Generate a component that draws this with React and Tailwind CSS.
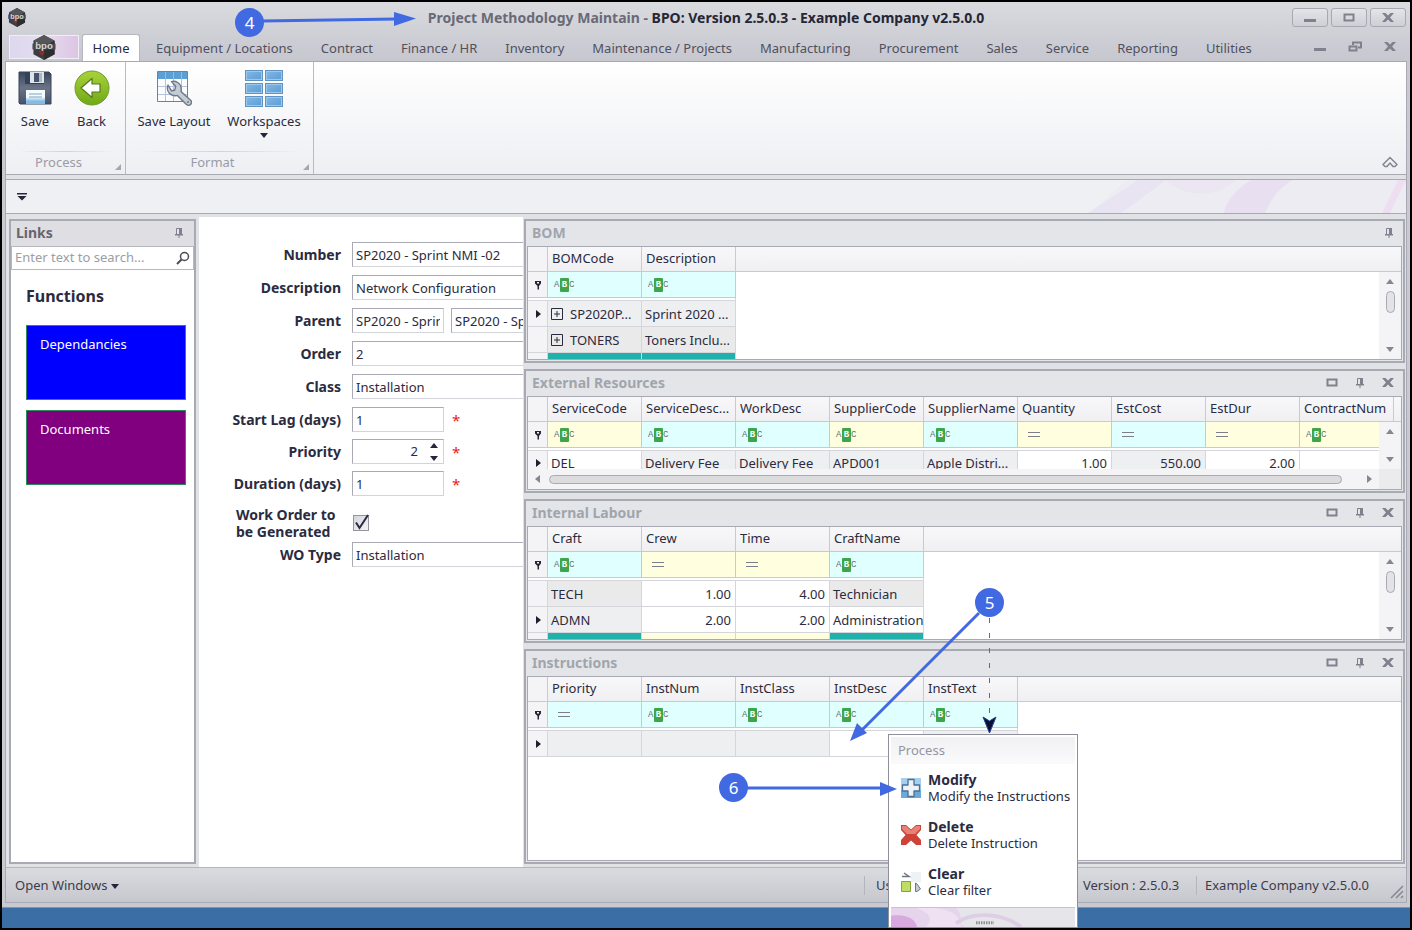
import React, { useState } from 'react';

const menuTabs = [
  'Equipment / Locations',
  'Contract',
  'Finance / HR',
  'Inventory',
  'Maintenance / Projects',
  'Manufacturing',
  'Procurement',
  'Sales',
  'Service',
  'Reporting',
  'Utilities',
];

const bom = {
  columns: [
    { name: 'BOMCode', filter: 'abc', tone: 'cyan' },
    { name: 'Description', filter: 'abc', tone: 'cyan' },
  ],
  rows: [
    { active: true, cells: [{ text: 'SP2020P...', expand: true, shade: 'light' }, { text: 'Sprint 2020 ...', shade: 'light' }] },
    { cells: [{ text: 'TONERS', expand: true, shade: 'grey' }, { text: 'Toners Inclu...', shade: 'grey' }] },
    { cells: [{ shade: 'teal' }, { shade: 'teal' }] },
  ],
};

const externalResources = {
  columns: [
    { name: 'ServiceCode', filter: 'abc', tone: 'yellow' },
    { name: 'ServiceDesc...', filter: 'abc', tone: 'cyan' },
    { name: 'WorkDesc', filter: 'abc', tone: 'cyan' },
    { name: 'SupplierCode', filter: 'abc', tone: 'yellow' },
    { name: 'SupplierName', filter: 'abc', tone: 'cyan' },
    { name: 'Quantity', filter: 'eq', tone: 'yellow' },
    { name: 'EstCost', filter: 'eq', tone: 'cyan' },
    { name: 'EstDur', filter: 'eq', tone: 'yellow' },
    { name: 'ContractNum', filter: 'abc', tone: 'yellow' },
  ],
  rows: [
    {
      active: true,
      cells: [
        { text: 'DEL' },
        { text: 'Delivery Fee', shade: 'light' },
        { text: 'Delivery Fee', shade: 'light' },
        { text: 'APD001', shade: 'light' },
        { text: 'Apple Distri...', shade: 'light' },
        { text: '1.00', right: true },
        { text: '550.00', right: true, shade: 'light' },
        { text: '2.00', right: true },
        {},
      ],
    },
  ],
};

const internalLabour = {
  columns: [
    { name: 'Craft', filter: 'abc', tone: 'cyan' },
    { name: 'Crew', filter: 'eq', tone: 'yellow' },
    { name: 'Time', filter: 'eq', tone: 'yellow' },
    { name: 'CraftName', filter: 'abc', tone: 'cyan' },
  ],
  rows: [
    { cells: [{ text: 'TECH', shade: 'grey' }, { text: '1.00', right: true }, { text: '4.00', right: true }, { text: 'Technician', shade: 'grey' }] },
    { active: true, cells: [{ text: 'ADMN', shade: 'light' }, { text: '2.00', right: true }, { text: '2.00', right: true }, { text: 'Administration' }] },
    { cells: [{ shade: 'teal' }, { shade: 'yellow' }, { shade: 'yellow' }, { shade: 'teal' }] },
  ],
};

const instructions = {
  columns: [
    { name: 'Priority', filter: 'eq', tone: 'cyan' },
    { name: 'InstNum', filter: 'abc', tone: 'cyan' },
    { name: 'InstClass', filter: 'abc', tone: 'cyan' },
    { name: 'InstDesc', filter: 'abc', tone: 'cyan' },
    { name: 'InstText', filter: 'abc', tone: 'cyan' },
  ],
  rows: [
    { active: true, cells: [{ shade: 'light' }, { shade: 'light' }, { shade: 'light' }, {}, { shade: 'light' }] },
  ],
};

const tones = { cyan: 'bg-[#e0ffff]', yellow: 'bg-[#ffffe0]' };

const shades = {
  light: 'bg-[#eeeff1]',
  grey: 'bg-[#eaeaea]',
  teal: 'bg-[#20b2aa]',
  yellow: 'bg-[#ffffe0]',
};

/* ---------- icons ---------- */

const BpoLogo = ({ className }) => (
  <svg viewBox="0 0 24 26" className={className} aria-hidden="true">
    <path d="M12 0 23 6v14l-11 6L1 20V6z" fill="#3d3d40" />
    <path d="M12 0 23 6 12 12 1 6z" fill="#56565a" />
    <path d="M12 12 23 6v14l-11 6z" fill="#2e2e31" />
    <path d="M7 16.500l3 3.500 2-3" stroke="#a8282c" strokeWidth="1.500" fill="none" />
    <path d="M0 9h24v6H0z" fill="#4a4a4e" />
    <text x="12" y="15" textAnchor="middle" fontSize="10" fontWeight="700" fontFamily="Liberation Sans, sans-serif" fill="#d4d4d8">bpo</text>
  </svg>
);

const SaveIcon = () => (
  <svg viewBox="0 0 36 36" className="h-9 w-9" aria-hidden="true">
    <defs>
      <linearGradient id="disk" x1="0" y1="0" x2="0" y2="1">
        <stop offset="0" stopColor="#39465a" />
        <stop offset="0.5" stopColor="#6b7485" />
        <stop offset="1" stopColor="#47536a" />
      </linearGradient>
      <linearGradient id="diskLabel" x1="0" y1="0" x2="0" y2="1">
        <stop offset="0.5" stopColor="#f5fafd" />
        <stop offset="0.8" stopColor="#7fbde6" />
      </linearGradient>
    </defs>
    <path d="M2 2h30l2 2v30H3l-1-1z" fill="url(#disk)" stroke="#39445a" />
    <path d="M8 2h19v12H8z" fill="#34415a" />
    <path d="M13 2h14v11H13z" fill="#dfe3ea" />
    <path d="M17 3h7v9h-7z" fill="#45536b" />
    <path d="M22 3h3v9h-3z" fill="#aeb7c5" />
    <path d="M9 20h19v14H9z" fill="url(#diskLabel)" />
    <path d="M12 24h13M12 27h13" stroke="#7ea5c4" />
  </svg>
);

const BackIcon = () => (
  <svg viewBox="0 0 36 36" className="h-9 w-9" aria-hidden="true">
    <defs>
      <linearGradient id="back" x1="0" y1="0" x2="0" y2="1">
        <stop offset="0" stopColor="#a9d23c" />
        <stop offset="1" stopColor="#6fa916" />
      </linearGradient>
    </defs>
    <circle cx="18" cy="18" r="17" fill="url(#back)" stroke="#6f9a2b" />
    <path d="M7 18 18 8.500v5.500h8v8h-8v5.500z" fill="#fff" stroke="#56791d" strokeWidth="1.200" strokeLinejoin="round" />
  </svg>
);

const LayoutIcon = () => (
  <svg viewBox="0 0 36 36" className="h-9 w-9" aria-hidden="true">
    <path d="M1.500 1.500h30v30h-30z" fill="#fafcfe" stroke="#6384a8" />
    <path d="M2 2h29v7H2z" fill="#5c9fd4" />
    <path d="M9.500 2v7M17.500 2v7M25.500 2v7" stroke="#8abde3" />
    <path d="M2 16.500h29M2 24.500h29M9.500 9v22M17.500 9v22M25.500 9v22" stroke="#b4c3dc" />
    <path
      d="M12 15c-1.500 4 0 8 3.500 9.800 2 1 4 1.100 5.800.6l9.200 9c1.200 1.200 3 1.100 4.100 0 1.200-1.200 1.300-3 0-4.200L25 21.500c.7-3.500-.3-7-3.300-9-2-1.200-4.300-1.500-6.200-.9l4.200 4.600-1 4-3.200.6z"
      fill="#c3cbd5"
      stroke="#6d7887"
      strokeWidth="1.400"
      strokeLinejoin="round"
    />
    <circle cx="32" cy="32" r="1" fill="#6d7887" />
  </svg>
);

const WorkspacesIcon = () => (
  <svg viewBox="0 0 38 38" className="h-[38px] w-[38px]" aria-hidden="true">
    <defs>
      <linearGradient id="tile" x1="0" y1="0" x2="1" y2="1">
        <stop offset="0" stopColor="#84b9e6" />
        <stop offset="1" stopColor="#5b9bd3" />
      </linearGradient>
    </defs>
    {[0, 13, 26].map((y) =>
      [0, 20].map((x) => (
        <g key={`${x}-${y}`} fill="none">
          <rect x={x + 0.5} y={y + 0.5} width="17" height="10" fill="url(#tile)" stroke="#5f93c4" />
          <rect x={x + 1.5} y={y + 1.5} width="15" height="8" stroke="#9ac8ec" />
        </g>
      ))
    )}
  </svg>
);

const PinIcon = () => (
  <svg viewBox="0 0 10 12" className="h-3 w-[10px]" aria-hidden="true">
    <path d="M2.500 1.500h5v6h-5z" fill="#e4e5ea" stroke="#80818d" />
    <path d="M5 1h3v6H5zM1 7h8v1.500H1zM4.500 8h1v3h-1z" fill="#80818d" />
  </svg>
);

const BoxIcon = () => (
  <svg viewBox="0 0 12 10" className="h-[10px] w-3" aria-hidden="true">
    <path d="M1.500 1.500h9v6h-9z" fill="none" stroke="#80818d" strokeWidth="2" />
  </svg>
);

const CloseIcon = () => (
  <svg viewBox="0 0 12 10" className="h-[10px] w-3" aria-hidden="true">
    <path d="M0 0h3.500L6 2.500 8.500 0H12L8 4.500 12 9H8.500L6 6.500 3.500 9H0l4-4.500z" fill="#80818d" />
  </svg>
);

const MinIcon = () => (
  <svg viewBox="0 0 12 10" className="h-[10px] w-3" aria-hidden="true">
    <path d="M0 6h12v3H0z" fill="#80818d" />
  </svg>
);

const RestoreIcon = () => (
  <svg viewBox="0 0 14 12" className="h-3 w-[14px]" aria-hidden="true">
    <path d="M5 4V1.500h8v5h-3" fill="none" stroke="#80818d" strokeWidth="2" />
    <path d="M1.500 5.500h7v4h-7z" fill="none" stroke="#80818d" strokeWidth="2" />
  </svg>
);

const Arrow = ({ dir, className = 'text-[#85868f]' }) => {
  const paths = {
    up: 'M0 6 4 1l4 5z',
    down: 'M0 2h8L4 7z',
    left: 'M6 0v8L1 4z',
    right: 'M2 0v8l5-4z',
  };
  return (
    <svg viewBox="0 0 8 8" className={`h-2 w-2 shrink-0 ${className}`} aria-hidden="true">
      <path d={paths[dir]} fill="currentColor" />
    </svg>
  );
};

const FilterRowIcon = () => (
  <svg viewBox="0 0 8 10" className="mx-auto h-[10px] w-2" aria-hidden="true">
    <path d="M1 1h6v2.500L5 6v3.500H3.500V6L1 3.500z" fill="#26263a" />
    <path d="M3 2h2v1.500H3z" fill="#f5f5f8" />
  </svg>
);

const ExpandIcon = () => (
  <svg viewBox="0 0 12 12" className="h-3 w-3 shrink-0" aria-hidden="true">
    <path d="M.5.500h11v11H.5zM3 6h6M6 3v6" fill="none" stroke="#2b2b3f" />
  </svg>
);

const AbcIcon = () => (
  <span className="flex items-center pl-[6px] font-['Liberation_Mono',monospace] text-[9px] leading-[14px] text-[#6c6c72]">
    <span className="w-[6px]">A</span>
    <span className="flex w-[9px] justify-center rounded-[1px] bg-[#3fa54a] font-bold text-white">B</span>
    <span>C</span>
  </span>
);

const EqualsIcon = () => (
  <span className="ml-[10px] block h-[5px] w-3 border-y border-[#7d7f88]" />
);

/* ---------- docked panels ---------- */

const Panel = ({ title, pinOnly, className, children }) => (
  <section className={`flex flex-col border-2 border-[#a8a9b2] bg-[#e4e5e9] px-px pb-px ${className}`}>
    <header className="flex h-[25px] shrink-0 items-center pr-2 pb-[2px] pl-[5px]">
      <h2 className="flex-1 text-[14px] leading-5 font-bold text-[#a0a5ad]">{title}</h2>
      <div className="flex items-center gap-[17px]">
        {!pinOnly && <button aria-label={`Maximize ${title}`}><BoxIcon /></button>}
        <button aria-label={`Pin ${title}`}><PinIcon /></button>
        {!pinOnly && <button aria-label={`Close ${title}`}><CloseIcon /></button>}
      </div>
    </header>
    <div className="flex min-h-0 flex-1 flex-col border border-[#a8a9b2] bg-white">{children}</div>
  </section>
);

const VScroll = ({ thumb }) => (
  <div className="z-10 col-start-1 row-start-1 mt-[25px] flex w-[22px] flex-col items-center justify-self-end bg-[#f4f4f6] py-[6px]">
    <Arrow dir="up" />
    {thumb && <div className="mt-[5px] h-[22px] w-[9px] rounded-full border border-[#a9aab2] bg-[#e3e3e7]" />}
    <Arrow dir="down" className="mt-auto text-[#85868f]" />
  </div>
);

const HScroll = () => (
  <div className="flex h-5 shrink-0 bg-[#f4f4f6]">
    <div className="flex flex-1 items-center gap-[7px] px-[6px]">
      <Arrow dir="left" />
      <div className="mr-4 h-[9px] flex-1 rounded-full border border-[#a9aab2] bg-[#dcdcdf]" />
      <Arrow dir="right" />
    </div>
    <div className="w-[22px] bg-[#ebebed]" />
  </div>
);

const DataGrid = ({ data, label, scroll, thumb, rowClass = 'h-[26px]' }) => (
  <div className="grid min-h-0 flex-1 grid-cols-[minmax(0,1fr)] grid-rows-[minmax(0,1fr)] overflow-hidden">
    <div className="col-start-1 row-start-1 overflow-hidden">
      <table aria-label={label} className="w-full table-fixed border-separate border-spacing-0 text-[13px] leading-4">
        <colgroup>
          <col className="w-5" />
          {data.columns.map((col) => <col key={col.name} className="w-[94px]" />)}
          <col />
        </colgroup>
        <thead>
          <tr className="h-[25px]">
            <th className="border-r border-b border-[#c9cad1] bg-[#f4f4f7] p-0" />
            {data.columns.map((col) => (
              <th key={col.name} className="overflow-hidden border-r border-b border-[#c9cad1] bg-linear-to-b from-[#f8f8fa] to-[#f0f0f3] p-0 pb-[2px] pl-1 text-left font-normal whitespace-nowrap">
                {col.name}
              </th>
            ))}
            <th className="border-b border-[#c9cad1] bg-linear-to-b from-[#f8f8fa] to-[#f0f0f3] p-0" />
          </tr>
        </thead>
        <tbody>
          <tr className="h-[26px]">
            <td className="border-r border-b border-[#c9cad1] bg-[#f4f4f7] p-0"><FilterRowIcon /></td>
            {data.columns.map((col) => (
              <td key={col.name} className={`border-r border-b border-[#c9cad1] p-0 ${tones[col.tone]}`}>
                {col.filter === 'abc' ? <AbcIcon /> : <EqualsIcon />}
              </td>
            ))}
            <td className="p-0" />
          </tr>
          <tr className="h-[3px]">
            <td colSpan={data.columns.length + 1} className="border-r border-b border-[#d5d6dc] p-0" />
            <td className="p-0" />
          </tr>
          {data.rows.map((row, i) => (
            <tr key={i} className={rowClass}>
              <td className="border-r border-b border-[#d5d6dc] bg-[#f4f4f7] p-0">
                {row.active && <Arrow dir="right" className="mx-auto text-[#1f1f30]" />}
              </td>
              {row.cells.map((cell, j) => (
                <td key={j} className={`border-r border-b border-[#d5d6dc] p-0 ${shades[cell.shade] || 'bg-white'}`}>
                  <div className={`flex items-center overflow-hidden whitespace-nowrap ${cell.right ? 'justify-end pr-1' : 'pl-[3px]'} ${cell.expand ? 'gap-[7px]' : ''}`}>
                    {cell.expand && <ExpandIcon />}
                    <span>{cell.text}</span>
                  </div>
                </td>
              ))}
              <td className="p-0" />
            </tr>
          ))}
        </tbody>
      </table>
    </div>
    {scroll && <VScroll thumb={thumb} />}
  </div>
);

/* ---------- ribbon ---------- */

const RibbonButton = ({ icon, label, caret, className }) => (
  <button className={`flex flex-col items-center pt-2 ${className}`}>
    <span className="flex h-[43px]">{icon}</span>
    <span className="text-[13px] leading-4 whitespace-nowrap">{label}</span>
    {caret && <Arrow dir="down" className="mt-[2px] text-[#26263a]" />}
  </button>
);

const RibbonGroup = ({ label, className, children }) => (
  <div className={`flex flex-col border-r border-[#b9bac2] ${className}`}>
    <div className="flex flex-1">{children}</div>
    <div className="mx-3 h-px bg-linear-to-r from-transparent via-[#d2d3d9] to-transparent" />
    <div className="flex h-[22px] items-center pr-1 text-[13px] text-[#9a9ba5]">
      <span className="flex-1 pr-1 text-center">{label}</span>
      <svg viewBox="0 0 6 6" className="mt-2 h-[6px] w-[6px]" aria-hidden="true"><path d="M6 0v6H0z" fill="#a5a6ae" /></svg>
    </div>
  </div>
);

/* ---------- form ---------- */

const inputClass =
  'h-[25px] border border-[#d3d4da] border-t-[#a9aab3] border-l-[#a9aab3] bg-white px-[3px] text-[13px] outline-none';

const Field = ({ id, label, children }) => (
  <div className="flex h-[25px] items-center">
    <label htmlFor={id} className="w-[142px] shrink-0 text-right text-[14px] font-bold whitespace-nowrap">{label}</label>
    <div className="ml-[11px] flex min-w-0 flex-1 items-center">{children}</div>
  </div>
);

const Required = () => <span className="ml-2 text-[15px] leading-4 text-[#f02020]">*</span>;

const DetailForm = () => {
  const [generate, setGenerate] = useState(true);

  return (
    <form className="mt-[3px] ml-[3px] w-[324px] shrink-0 overflow-hidden bg-white pt-[25px]">
      <div className="flex flex-col gap-2">
        <Field id="number" label="Number">
          <input id="number" defaultValue="SP2020 - Sprint NMI -02" className={`${inputClass} w-full border-r-0`} />
        </Field>
        <Field id="description" label="Description">
          <input id="description" defaultValue="Network Configuration" className={`${inputClass} w-full border-r-0`} />
        </Field>
        <Field id="parent" label="Parent">
          <input id="parent" defaultValue="SP2020 - Sprint" className={`${inputClass} w-[92px]`} />
          <input aria-label="Parent description" defaultValue="SP2020 - Sprint" className={`${inputClass} ml-[7px] w-[72px] border-r-0 pr-0`} />
        </Field>
        <Field id="order" label="Order">
          <input id="order" defaultValue="2" className={`${inputClass} w-full border-r-0`} />
        </Field>
        <Field id="class" label="Class">
          <input id="class" defaultValue="Installation" className={`${inputClass} w-full border-r-0`} />
        </Field>
      </div>
      <div className="mt-2 flex flex-col gap-[7px]">
        <Field id="startLag" label="Start Lag (days)">
          <input id="startLag" defaultValue="1" className={`${inputClass} w-[92px]`} />
          <Required />
        </Field>
        <Field id="priority" label="Priority">
          <div className={`${inputClass} flex w-[92px] items-center`}>
            <input id="priority" defaultValue="2" className="w-full min-w-0 pr-3 text-right outline-none" />
            <div className="flex flex-col gap-1 pr-[2px]">
              <button type="button" aria-label="Increase priority" className="block"><Arrow dir="up" className="text-[#26263a]" /></button>
              <button type="button" aria-label="Decrease priority" className="block"><Arrow dir="down" className="text-[#26263a]" /></button>
            </div>
          </div>
          <Required />
        </Field>
        <Field id="duration" label="Duration (days)">
          <input id="duration" defaultValue="1" className={`${inputClass} w-[92px]`} />
          <Required />
        </Field>
      </div>
      <div className="mt-[10px] flex items-center">
        <label htmlFor="generate" className="w-[142px] pl-[37px] text-[14px] leading-[17px] font-bold whitespace-nowrap">
          Work Order to<br />be Generated
        </label>
        <span className="ml-3 grid">
          <input
            id="generate"
            type="checkbox"
            checked={generate}
            onChange={(e) => setGenerate(e.target.checked)}
            className="col-start-1 row-start-1 h-4 w-4 appearance-none border border-[#94959f] bg-linear-to-br from-[#d4d5db] to-[#f5f5f8]"
          />
          {generate && (
            <svg viewBox="0 0 16 16" className="pointer-events-none col-start-1 row-start-1 h-4 w-4 overflow-visible" aria-hidden="true">
              <path d="M3 7.500 6.500 13 15 0" fill="none" stroke="#2b2b3f" strokeWidth="2" />
            </svg>
          )}
        </span>
      </div>
      <div className="mt-[2px]">
        <Field id="woType" label="WO Type">
          <input id="woType" defaultValue="Installation" className={`${inputClass} w-full border-r-0`} />
        </Field>
      </div>
    </form>
  );
};

const LinksPanel = () => (
  <aside className="mt-[5px] mb-[3px] flex w-[187px] shrink-0 flex-col border-2 border-[#a8a9b2] bg-white">
    <header className="flex h-[25px] items-center bg-[#dfdfe3] pr-[10px] pb-[2px] pl-[5px]">
      <h2 className="flex-1 text-[14px] leading-5 font-bold text-[#65666f]">Links</h2>
      <button aria-label="Pin links"><PinIcon /></button>
    </header>
    <div className="flex h-6 items-center border border-[#b6b7bf] px-[3px]">
      <input aria-label="Search links" placeholder="Enter text to search..." className="min-w-0 flex-1 text-[13px] outline-none placeholder:text-[#9c9da5]" />
      <svg viewBox="0 0 14 14" className="h-[14px] w-[14px]" aria-hidden="true">
        <circle cx="8.500" cy="5.500" r="4" fill="none" stroke="#4a4b58" strokeWidth="1.500" />
        <path d="M5.500 8.500 1 13" stroke="#4a4b58" strokeWidth="2" />
      </svg>
    </div>
    <h3 className="mt-4 ml-[15px] text-[16px] leading-5 font-bold">Functions</h3>
    <nav className="mt-[19px] flex flex-col gap-[10px] pr-2 pl-[15px] text-[13px] leading-4 text-white">
      <a href="#dependancies" className="block h-[75px] border border-[#2e8b57] bg-[#0000ff] px-[13px] py-[10px]">Dependancies</a>
      <a href="#documents" className="block h-[75px] border border-[#2e8b57] bg-[#800080] px-[13px] py-[10px]">Documents</a>
    </nav>
  </aside>
);

/* ---------- context menu ---------- */

const menuItems = [
  {
    name: 'Modify',
    text: 'Modify the Instructions',
    icon: (
      <>
        <path d="M0 0h20v20H0z" fill="#a5cfec" />
        <path d="M0 12h20v8H0z" fill="#6aaad8" />
        <path d="M7 1.500h6V7h5.500v6H13v5.500H7V13H1.500V7H7z" fill="#eef3f8" stroke="#4c6f94" strokeWidth="1.300" strokeLinejoin="round" />
      </>
    ),
  },
  {
    name: 'Delete',
    text: 'Delete Instruction',
    icon: (
      <>
        <path d="M0 0h5l5 4.500L15 0h5v5l-4.500 5 4.500 5v5h-5l-5-4.500L5 20H0v-5l4.500-5L0 5z" fill="#cf4238" />
        <path d="M1 1h4l5 4.500L15 1h4v3l-5 5H6L1 4z" fill="#e58378" />
      </>
    ),
  },
  {
    name: 'Clear',
    text: 'Clear filter',
    icon: (
      <>
        <path d="M10 0h10v10H10z" fill="#edf2f5" />
        <path d="M.5 9.500h9v10h-9z" fill="#c0dc62" stroke="#82a43b" />
        <path d="M1 4.500h7L3 1" fill="none" stroke="#6c7784" strokeWidth="1.500" />
        <path d="M14.500 11v8.500h1.500l3.500-2.500-3.500-5z" fill="#c4ccd4" stroke="#6c7784" />
      </>
    ),
  },
];

const ContextMenu = () => (
  <div className="absolute top-[734px] left-[888px] z-20 w-[190px] border border-[#8e8f9b] bg-white p-[2px] pb-0 text-[13px]">
    <div className="flex h-[27px] items-center bg-linear-to-b from-[#f1f1f4] to-[#fafafb] pl-[7px] text-[#94959e]">Process</div>
    <div className="flex flex-col gap-[15px] pt-2 pb-[9px] pl-[10px]">
      {menuItems.map((item) => (
        <button key={item.name} className="flex items-center gap-[7px] text-left leading-4 whitespace-nowrap">
          <svg viewBox="0 0 20 20" className="h-5 w-5 shrink-0" aria-hidden="true">{item.icon}</svg>
          <span>
            <span className="block text-[14px] leading-4 font-bold">{item.name}</span>
            <span className="block">{item.text}</span>
          </span>
        </button>
      ))}
    </div>
    <svg viewBox="0 0 184 20" preserveAspectRatio="none" className="block h-5 w-full border-t border-[#c5c6cd] bg-[#e6e6ea]" aria-hidden="true">
      <path d="M0 0h65c8 8 2 15 8 20H0z" fill="#e6d3ec" />
      <path d="M0 8c18-2 25 5 26 12H0z" fill="#d7a9df" />
      <path d="M25 0c15 5 17 12 10 20h35C70 8 60 2 45 0z" fill="#efe1f2" />
      <path d="M65 16c15-12 45-12 65 4" fill="none" stroke="#dccfe5" strokeWidth="4" />
      <path d="M85 15.500h18" stroke="#8c8d97" strokeWidth="3" strokeDasharray="1.500 1" />
    </svg>
  </div>
);

/* ---------- step markers ---------- */

const Step = ({ n, className }) => (
  <span className={`absolute z-30 flex h-[29px] w-[29px] items-center justify-center rounded-full bg-[#4169e1] text-[17px] text-white ${className}`}>{n}</span>
);

const Markers = () => (
  <>
    <svg viewBox="0 0 1412 930" className="pointer-events-none absolute top-0 left-0 z-30 h-[930px] w-[1412px]" aria-hidden="true">
      <g fill="#4169e1" stroke="#4169e1">
        <path d="M262 21 396 19M979 613 861 731M746 788h136" strokeWidth="3" />
        <path d="M416 18.500 394 12v14zM850 741l7-18 10 10zM897 789l-17-7v14z" stroke="none" />
      </g>
      <path d="M989.500 618v95" stroke="#4169e1" strokeDasharray="5 10" />
      <path d="m983 717 6.500 4 6.500-4-6.500 16z" fill="#0c1030" stroke="#26408f" />
    </svg>
    <Step n="4" className="top-[8px] left-[235px]" />
    <Step n="5" className="top-[588px] left-[975px]" />
    <Step n="6" className="top-[773px] left-[719px]" />
  </>
);

const captionButton =
  'flex h-[19px] w-9 items-center justify-center rounded-[3px] border border-[#a7a8b2] bg-linear-to-b from-[#e3e3e8] to-[#cfd0d6]';

const App = () => {
  return (
    <div className="relative flex h-screen flex-col overflow-hidden bg-black p-[2px] font-['Noto_Sans','Open_Sans',sans-serif] text-[13px] text-[#2b2b40]">
      <div className="flex min-h-0 flex-1 flex-col rounded-t-[3px] border-b border-[#8e8f99] bg-[#c9cad1] px-[3px] pb-1">
        {/* Title bar */}
        <div className="-mx-[3px] flex h-[59px] shrink-0 flex-col bg-linear-to-b from-[#dadbdf] to-[#c6c7cf] px-[3px]">
          <div className="grid h-[31px] grid-cols-[120px_1fr_120px] items-center">
            <BpoLogo className="ml-[3px] h-[19px] w-[18px]" />
            <h1 className="text-center text-[14px] font-bold whitespace-nowrap text-[#262635]">
              <span className="text-[#6a6a76]">Project Methodology Maintain - </span>
              BPO: Version 2.5.0.3 - Example Company v2.5.0.0
            </h1>
            <div className="flex justify-end gap-[3px] pr-px">
              <button aria-label="Minimize" className={captionButton}><MinIcon /></button>
              <button aria-label="Maximize" className={captionButton}><BoxIcon /></button>
              <button aria-label="Close" className={captionButton}><CloseIcon /></button>
            </div>
          </div>
          <nav className="flex flex-1 items-end text-[#50505e]">
            <button aria-label="Application menu" className="mb-[2px] ml-1 flex h-6 w-[70px] items-center justify-center border border-[#f0eff5] bg-linear-to-r from-[#ddd8ee] via-[#e6dcef] to-[#dcc5e4]">
              <BpoLogo className="h-[25px] w-6" />
            </button>
            <button className="ml-[3px] h-[27px] w-[58px] rounded-t-[3px] border-x border-t border-[#b5b6be] bg-white pt-px text-[#2b2b40]">Home</button>
            <div className="ml-4 flex h-[27px] items-center gap-7 pt-[2px]">
              {menuTabs.map((tab) => (
                <button key={tab} className="whitespace-nowrap">{tab}</button>
              ))}
            </div>
            <div className="mr-[11px] ml-auto flex h-7 items-center gap-[22px]">
              <button aria-label="Minimize document"><MinIcon /></button>
              <button aria-label="Restore document"><RestoreIcon /></button>
              <button aria-label="Close document"><CloseIcon /></button>
            </div>
          </nav>
        </div>

        <div className="flex min-h-0 flex-1 flex-col border border-[#a8a9b2] bg-[#e1e2e6]">
          {/* Ribbon */}
          <div className="flex h-[113px] shrink-0 border-b border-[#a8a9b2] bg-linear-to-b from-white to-[#eeeff3]">
            <RibbonGroup label="Process" className="w-[120px]">
              <RibbonButton icon={<SaveIcon />} label="Save" className="ml-px w-14" />
              <RibbonButton icon={<BackIcon />} label="Back" className="w-[57px]" />
            </RibbonGroup>
            <RibbonGroup label="Format" className="w-[188px]">
              <RibbonButton icon={<LayoutIcon />} label="Save Layout" className="ml-[3px] w-[90px]" />
              <RibbonButton icon={<WorkspacesIcon />} label="Workspaces" caret className="w-[90px]" />
            </RibbonGroup>
            <button aria-label="Collapse ribbon" className="mt-auto mr-2 mb-[6px] ml-auto">
              <svg viewBox="0 0 16 12" className="h-3 w-4" aria-hidden="true">
                <path d="M1 8.500 8 1.500l7 7-2 2h-2L8 7l-3 3.500H3z" fill="none" stroke="#85868f" strokeWidth="1.500" strokeLinejoin="round" />
              </svg>
            </button>
          </div>

          {/* Quick access bar */}
          <div className="mt-1 flex h-[35px] shrink-0 items-center border-y border-[#a8a9b2] bg-[#eff0f3]">
            <button aria-label="Customize toolbar" className="ml-[11px]">
              <svg viewBox="0 0 10 8" className="h-2 w-[10px]" aria-hidden="true">
                <path d="M0 0h10v1.500H0zM.5 3h9L5 7.500z" fill="#26263a" />
              </svg>
            </button>
            <svg viewBox="0 0 330 33" className="ml-auto h-[33px] w-[330px]" aria-hidden="true">
              <path d="M50 0h280v33H15z" fill="#edecf2" />
              <path d="M62 0h28L45 33H12z" fill="#e8e4f2" />
              <path d="M90 0c15 16 50 20 70 0z" fill="#ebe6f2" />
              <path d="M175 0h42c-15 8-22 20-28 33h-41c2-12 12-24 27-33z" fill="#e8dff0" />
              <path d="M322 0h8L314 33h-8z" fill="#eddff0" />
            </svg>
          </div>

          {/* Work area */}
          <div className="flex min-h-0 flex-1 pl-[3px]">
            <LinksPanel />
            <DetailForm />
            <div className="mt-[5px] mr-px mb-[3px] ml-px flex min-w-0 flex-1 flex-col gap-[6px]">
              <Panel title="BOM" pinOnly className="h-[144px] shrink-0">
                <DataGrid label="BOM" data={bom} scroll thumb />
              </Panel>
              <Panel title="External Resources" className="h-[124px] shrink-0">
                <DataGrid label="External Resources" data={externalResources} scroll rowClass="h-6" />
                <HScroll />
              </Panel>
              <Panel title="Internal Labour" className="h-[144px] shrink-0">
                <DataGrid label="Internal Labour" data={internalLabour} scroll thumb />
              </Panel>
              <Panel title="Instructions" className="min-h-0 flex-1">
                <DataGrid label="Instructions" data={instructions} />
              </Panel>
            </div>
          </div>

          {/* Status bar */}
          <footer className="flex h-[35px] shrink-0 items-center border-t border-[#b4b5bd] bg-linear-to-b from-[#dadbdf] to-[#c7c8cf] pt-px pl-[9px] text-[#3b3b4c]">
            <button className="flex items-center gap-1">
              Open Windows <Arrow dir="down" className="text-[#26263a]" />
            </button>
            <span className="ml-auto w-[219px] border-l border-[#b4b5bd] pl-[11px]">Us</span>
            <span className="w-[114px] border-r border-[#b4b5bd]">Version : 2.5.0.3</span>
            <span className="w-[193px] pl-2">Example Company v2.5.0.0</span>
            <svg viewBox="0 0 14 14" className="mt-3 mr-[2px] h-[14px] w-[14px]" aria-hidden="true">
              <path d="M1 13 13 1M6 13l7-7M11 13l2-2" stroke="#85868f" strokeWidth="1.500" />
            </svg>
          </footer>
        </div>
      </div>
      <div className="h-5 shrink-0 bg-[#3a6ea5]" />

      <ContextMenu />
      <Markers />
    </div>
  );
};

export default App;
